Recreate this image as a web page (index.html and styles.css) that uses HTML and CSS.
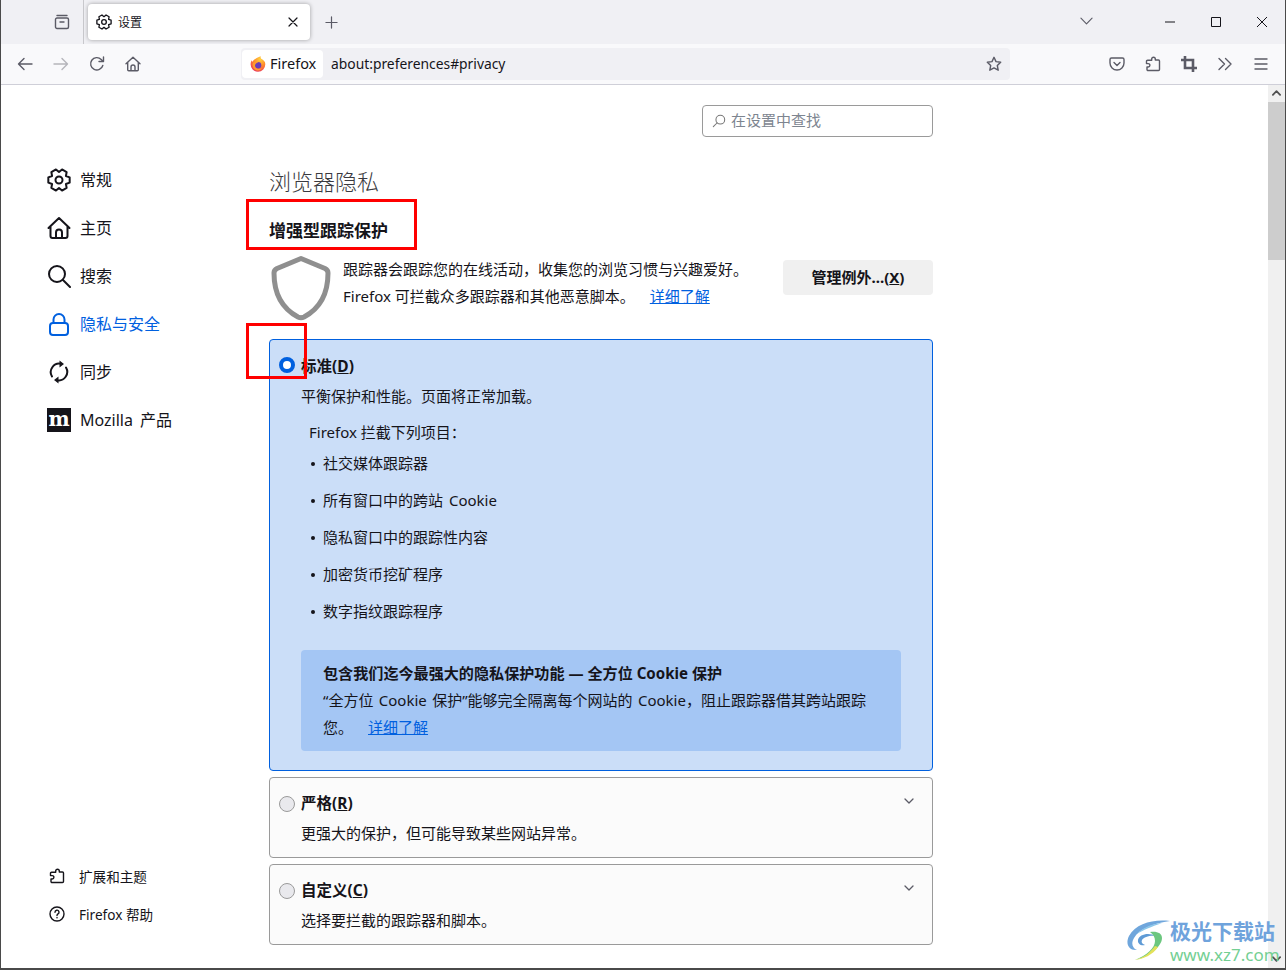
FILE: index.html
```html
<!DOCTYPE html>
<html lang="zh-CN">
<head>
<meta charset="utf-8">
<title>设置</title>
<link rel="stylesheet" href="styles.css">
</head>
<body>
<div class="window">
  <header class="tabbar">
    <button class="tabs-btn" aria-label="tabs">
      <svg class="ic16" viewBox="0 0 16 16"><path d="M3 1.5h10M1.5 5.5a1.5 1.5 0 0 1 1.5-1.5h10a1.5 1.5 0 0 1 1.5 1.5v7.5a1.5 1.5 0 0 1-1.5 1.5H3a1.5 1.5 0 0 1-1.5-1.5zM6 8h4"/></svg>
    </button>
    <div class="tab">
      <svg class="ic16 dark" viewBox="0 0 24 24"><polygon class="thick" points="22.67,9.34 22.67,14.66 18.93,16 19.64,19.91 15.03,22.57 12,20 8.97,22.57 4.36,19.91 5.07,16 1.33,14.66 1.33,9.34 5.07,8 4.36,4.09 8.97,1.43 12,4 15.03,1.43 19.64,4.09 18.93,8"/><circle class="thick" cx="12" cy="12" r="3.5"/></svg>
      <span class="tab-title">设置</span>
      <svg class="tab-close" viewBox="0 0 10 10"><path d="M1 1l8 8M9 1l-8 8"/></svg>
    </div>
    <svg class="newtab" viewBox="0 0 14 14"><path d="M7 1v12M1 7h12"/></svg>
    <svg class="tablist" viewBox="0 0 14 8"><path d="M1 1l6 6 6-6"/></svg>
    <div class="winctl">
      <svg viewBox="0 0 12 12"><path d="M1 6h10"/></svg>
      <svg viewBox="0 0 12 12"><rect x="1.5" y="1.5" width="9" height="9"/></svg>
      <svg viewBox="0 0 12 12"><path d="M1 1l10 10M11 1L1 11"/></svg>
    </div>
  </header>

  <nav class="toolbar">
    <button class="tb"><svg class="ic16" viewBox="0 0 16 16"><path d="M15 8H1.5M7 2.5 1.5 8 7 13.5"/></svg></button>
    <button class="tb faded"><svg class="ic16" viewBox="0 0 16 16"><path d="M1 8h13.5M9 2.5 14.5 8 9 13.5"/></svg></button>
    <button class="tb"><svg class="ic16" viewBox="0 0 16 16"><path d="M13.8 9.5A6.2 6.2 0 1 1 12.2 3.4L14 5.5M14.5 1v4.5H10"/></svg></button>
    <button class="tb"><svg class="ic16" viewBox="0 0 16 16"><path d="M1 7.8 8 1.2l7 6.6M2.7 6.5v7.2a1 1 0 0 0 1 1h8.6a1 1 0 0 0 1-1V6.500M6 14.500v-3.500a2 2 0 0 1 4 0v3.500"/></svg></button>
    <div class="urlbar">
      <div class="identity">
        <svg class="fxlogo" viewBox="0.5 0 15 16">
          <defs>
            <radialGradient id="fxg" cx="0.65" cy="0.2" r="0.95"><stop offset="0" stop-color="#ffd23d"/><stop offset="0.45" stop-color="#ff8a2b"/><stop offset="1" stop-color="#e5246b"/></radialGradient>
          </defs>
          <path fill="url(#fxg)" d="M8 15.800A7.500 7.500 0 0 1 .6 8C.6 6.500 1 5.200 1.800 4.200c.1.800.4 1.200.8 1.500C3 4.500 4 3.500 5 3.200 6 2 8 1.200 10.800.2c-.4 1.200-.2 2 .4 2.600 2.300 1 4.100 3 4.100 5.200A7.500 7.500 0 0 1 8 15.800z"/>
          <circle cx="8" cy="9.200" r="3.300" fill="#6a3bb8"/>
          <path fill="#ff9a2e" d="M3 7c1.500-1 3.500-1.200 5.500-.6C6.500 6.600 5 7.800 5 9.500c0 2 1.700 3.500 4 3.500 1.500 0 2.700-.6 3.500-1.700-.6 1.900-2.400 3.200-4.500 3.200C5 14.500 2.600 12 2.600 9.200 2.600 8.300 2.700 7.600 3 7z"/>
        </svg>
        <span class="lift">Firefox</span>
      </div>
      <span class="url lift">about:preferences#privacy</span>
      <svg class="ic16 star" viewBox="0 0 16 16"><path d="M8 1.300l2 4.300 4.700.6-3.400 3.300.9 4.700L8 11.900l-4.200 2.300.9-4.700L1.300 6.200 6 5.600z"/></svg>
    </div>
    <div class="tb-right">
      <button class="tb"><svg class="ic16" viewBox="0 0 16 16"><path d="M2.500 2h11A1.500 1.500 0 0 1 15 3.500V7a7 7 0 0 1-14 0V3.500A1.500 1.500 0 0 1 2.500 2zM5 6.500l3 3 3-3"/></svg></button>
      <button class="tb"><svg class="ic16" viewBox="0 0 16 16"><path d="M8.500 1.200a1.800 1.800 0 0 1 1.800 1.800v1h3.200a1 1 0 0 1 1 1v8.500a1 1 0 0 1-1 1H3a1 1 0 0 1-1-1V11h1.200a1.700 1.700 0 0 0 0-3.400H1.500V5.200a1 1 0 0 1 1-1h4.200V3a1.800 1.800 0 0 1 1.800-1.800z"/></svg></button>
      <button class="tb"><svg class="ic16 heavy" viewBox="0 0 16 16"><path d="M4 0v12h12M0 4h12v12"/></svg></button>
      <button class="tb"><svg class="ic16" viewBox="0 0 16 16"><path d="M2 2.500 7.500 8 2 13.500M8.500 2.500 14 8l-5.500 5.500"/></svg></button>
      <button class="tb"><svg class="ic16" viewBox="0 0 16 16"><path d="M2 3h12M2 8h12M2 13h12"/></svg></button>
    </div>
  </nav>

  <div class="page">
    <aside class="sidebar">
      <ul class="nav">
        <li class="nav-item">
          <svg class="ic24" viewBox="0 0 24 24"><polygon points="22.67,9.34 22.67,14.66 18.93,16 19.64,19.91 15.03,22.57 12,20 8.97,22.57 4.36,19.91 5.07,16 1.33,14.66 1.33,9.34 5.07,8 4.36,4.09 8.97,1.43 12,4 15.03,1.43 19.64,4.09 18.93,8"/><circle cx="12" cy="12" r="3.500"/></svg>
          <span class="lift">常规</span>
        </li>
        <li class="nav-item">
          <svg class="ic24" viewBox="0 0 24 24"><path d="M1.500 12 12 2l10.500 10M3.500 10.500V20a2 2 0 0 0 2 2h13a2 2 0 0 0 2-2v-9.500M9 22v-5.500a3 3 0 0 1 6 0V22"/></svg>
          <span class="lift">主页</span>
        </li>
        <li class="nav-item">
          <svg class="ic24" viewBox="0 0 24 24"><circle cx="10" cy="10" r="8"/><path d="M16 16l7 7"/></svg>
          <span class="lift">搜索</span>
        </li>
        <li class="nav-item active">
          <svg class="ic24" viewBox="0 0 24 24"><rect x="3" y="11" width="18" height="12" rx="3"/><path d="M6.500 11V7.500a5.500 5.500 0 0 1 11 0V11"/></svg>
          <span class="lift">隐私与安全</span>
        </li>
        <li class="nav-item">
          <svg class="ic24" viewBox="0 0 24 24"><path d="M5 16.500A8.500 8.500 0 0 1 14 3.800M19 7.500A8.500 8.500 0 0 1 10 20.200"/><path class="fill" d="M12.500 .5v7l4.500-3.500zM11.500 23.500v-7L7 20z"/></svg>
          <span class="lift">同步</span>
        </li>
        <li class="nav-item">
          <span class="moz">m</span>
          <span class="lift wide">Mozilla 产品</span>
        </li>
      </ul>
      <ul class="nav-foot">
        <li class="foot-item">
          <svg class="ic16 dark" viewBox="0 0 16 16"><path d="M8.500 1.200a1.800 1.800 0 0 1 1.800 1.800v1h3.200a1 1 0 0 1 1 1v8.500a1 1 0 0 1-1 1H3a1 1 0 0 1-1-1V11h1.200a1.700 1.700 0 0 0 0-3.400H1.500V5.200a1 1 0 0 1 1-1h4.200V3a1.800 1.800 0 0 1 1.800-1.800z"/></svg>
          <span>扩展和主题</span>
        </li>
        <li class="foot-item">
          <svg class="ic16 dark" viewBox="0 0 16 16"><circle cx="8" cy="8" r="7"/><path d="M6 6.200a2 2 0 1 1 3 1.700c-.7.400-1 .8-1 1.600"/><circle class="fill" cx="8" cy="11.800" r=".8"/></svg>
          <span>Firefox 帮助</span>
        </li>
      </ul>
    </aside>

    <main class="main">
      <div class="search-row">
        <div class="search">
          <svg class="search-ic" viewBox="0 0 16 16"><circle cx="9.500" cy="6.500" r="5"/><path d="M6 10 1.500 14.500"/></svg>
          <span>在设置中查找</span>
        </div>
      </div>
      <h1 class="title">浏览器隐私</h1>
      <h2 class="subtitle">增强型跟踪保护</h2>
      <section class="intro">
        <svg class="shield" viewBox="0 0 60 66"><path d="M30 3.500 54 13.500Q57 15 57 18C57 40 48 54 33 62Q30 63.500 27 62C12 54 3 40 3 18Q3 15 6 13.500Z"/></svg>
        <div class="intro-text">
          <p>跟踪器会跟踪您的在线活动，收集您的浏览习惯与兴趣爱好。</p>
          <p>Firefox 可拦截众多跟踪器和其他恶意脚本。<a class="link learn">详细了解</a></p>
        </div>
        <button class="manage">管理例外...(<u>X</u>)</button>
      </section>

      <section class="card selected">
        <div class="card-head"><span class="radio on"></span><strong>标准(<u>D</u>)</strong></div>
        <p class="card-desc">平衡保护和性能。页面将正常加载。</p>
        <p class="blocks">Firefox 拦截下列项目：</p>
        <ul class="block-list">
          <li>社交媒体跟踪器</li>
          <li>所有窗口中的跨站 Cookie</li>
          <li>隐私窗口中的跟踪性内容</li>
          <li>加密货币挖矿程序</li>
          <li>数字指纹跟踪程序</li>
        </ul>
        <div class="callout">
          <p class="callout-title"><strong>包含我们迄今最强大的隐私保护功能 — 全方位 Cookie 保护</strong></p>
          <p class="callout-body">“全方位 Cookie 保护”能够完全隔离每个网站的 Cookie，阻止跟踪器借其跨站跟踪</p>
          <p>您。<a class="link learn">详细了解</a></p>
        </div>
      </section>

      <section class="card">
        <div class="card-head"><span class="radio"></span><strong>严格(<u>R</u>)</strong><svg class="chev" viewBox="0 0 10 6"><path d="M1 1l4 4 4-4"/></svg></div>
        <p class="card-desc">更强大的保护，但可能导致某些网站异常。</p>
      </section>
      <section class="card">
        <div class="card-head"><span class="radio"></span><strong>自定义(<u>C</u>)</strong><svg class="chev" viewBox="0 0 10 6"><path d="M1 1l4 4 4-4"/></svg></div>
        <p class="card-desc">选择要拦截的跟踪器和脚本。</p>
      </section>
    </main>

    <div class="scrollbar">
      <svg class="sb-arrow" viewBox="0 0 10 6"><path d="M1 5l4-4 4 4"/></svg>
      <div class="sb-thumb"></div>
      <svg class="sb-arrow sb-down" viewBox="0 0 10 6"><path d="M1 1l4 4 4-4"/></svg>
    </div>
  </div>
</div>

<div class="mark mark-a"></div>
<div class="mark mark-b"></div>

<div class="watermark">
  <svg class="wm-logo" viewBox="0 0 44 40">
    <path fill="#6fa6dc" d="M44 1C28-1 10 3 3 16c-4 8 0 15 8 14-5-2-6-7-3-12C13 9 28 3 44 1z"/>
    <path fill="#8cc7ea" d="M36 3C25 4 16 8 11 14c6-4 14-7 25-11z"/>
    <path fill="#5f9bd6" d="M30 16c-7-4-17-2-18 4-.6 4 3 6 7 5-3-1-4-3-3-5 2-3 8-5 14-4z"/>
    <path fill="#6cc77f" d="M24 12c7-1 12 1 12 6 0 9-14 19-27 22 12-5 20-12 20-19 0-4-2-7-5-9z"/>
    <path fill="#e3e25a" d="M29 26C24 33 17 38 9 40c8-1 18-5 23-13z"/>
  </svg>
  <div class="wm-text">
    <div class="wm-cn">极光下载站</div>
    <div class="wm-en">www.xz7.com</div>
  </div>
</div>
</body>
</html>
```

FILE: styles.css
```css
* { box-sizing: border-box; }
html, body { margin: 0; padding: 0; }
body {
  width: 1286px;
  height: 970px;
  overflow: hidden;
  position: relative;
  background: #fff;
  color: #15141a;
  font-family: "Noto Sans", "Noto Sans CJK SC", sans-serif;
  font-size: 15px;
}
p, ul, h1, h2 { margin: 0; padding: 0; font-weight: normal; }
ul { list-style: none; }
button { border: 0; background: none; padding: 0; font: inherit; color: inherit; }
svg { fill: none; stroke-linecap: round; stroke-linejoin: round; flex: none; display: block; }
.lift { padding-bottom: 2px; }

.window {
  width: 1286px;
  height: 970px;
  display: flex;
  flex-direction: column;
  border: 1px solid #4a4a4a;
  border-top: 0;
  border-bottom-width: 2px;
}

.ic16 { width: 16px; height: 16px; stroke: #5b5b66; stroke-width: 1.4; }
.ic16.dark { stroke: #15141a; }
.ic16 .thick { stroke-width: 2; }
.ic24 { width: 24px; height: 24px; stroke: #15141a; stroke-width: 2; }
.fill { fill: currentColor; stroke: none; }

/* tab bar */
.tabbar {
  height: 44px;
  flex: none;
  display: flex;
  align-items: center;
  background: #f0f0f4;
}
.tabs-btn {
  width: 83px;
  height: 44px;
  border-right: 1px solid #c8c8cc;
  display: flex;
  align-items: center;
  justify-content: flex-end;
  padding-right: 13px;
}
.tab {
  width: 222px;
  height: 36px;
  margin-left: 4px;
  background: #fff;
  border-radius: 4px;
  box-shadow: 0 0 4px rgba(0, 0, 0, .35);
  display: flex;
  align-items: center;
  padding-left: 8px;
}
.tab-title { font-size: 12px; margin-left: 6px; flex: 1; }
.tab-close { width: 10px; height: 10px; stroke: #15141a; stroke-width: 1.2; margin-right: 12px; }
.newtab { width: 13px; height: 13px; stroke: #5b5b66; stroke-width: 1.3; margin-left: 15px; }
.tablist { width: 13px; height: 8px; stroke: #5b5b66; stroke-width: 1.2; margin-left: 742px; margin-top: -2px; }
.winctl { display: flex; gap: 34px; margin-left: 71px; margin-top: -1px; }
.winctl svg { width: 12px; height: 12px; stroke: #15141a; stroke-width: 1; stroke-linecap: butt; }

/* toolbar */
.toolbar {
  height: 41px;
  flex: none;
  display: flex;
  align-items: center;
  padding: 0 6px;
  background: #f9f9fb;
  border-bottom: 1px solid #cfcfd8;
}
.tb { width: 36px; height: 32px; display: flex; align-items: center; justify-content: center; }
.tb.faded svg { stroke: #b5b5bb; }
.tb .heavy { stroke-width: 2.600; stroke-linecap: butt; stroke-linejoin: miter; }
.urlbar {
  flex: 1;
  height: 32px;
  margin-left: 90px;
  margin-right: 89px;
  background: #f0f0f4;
  border-radius: 4px;
  display: flex;
  align-items: center;
  padding: 0 8px 0 1px;
}
.identity {
  height: 28px;
  width: 81px;
  background: #fff;
  border-radius: 4px;
  display: flex;
  align-items: center;
  padding-left: 8px;
  gap: 4px;
  font-size: 14.500px;
}
.fxlogo { width: 16px; height: 16px; }
.url { margin-left: 8px; flex: 1; font-size: 13.850px; }
.tb-right { display: flex; }

/* page layout */
.page { flex: 1; display: flex; min-height: 0; }
.sidebar {
  width: 268px;
  flex: none;
  display: flex;
  flex-direction: column;
  padding: 71px 0 35px 46px;
}
.nav-item {
  height: 48px;
  display: flex;
  align-items: center;
  gap: 9px;
  font-size: 16px;
}
.nav-item .wide { word-spacing: 3px; }
.nav-item.active { color: #0060df; }
.nav-item.active svg { stroke: #0060df; }
.moz {
  width: 24px;
  height: 24px;
  background: #15141a;
  color: #fff;
  font-family: "DejaVu Serif", serif;
  font-weight: 700;
  font-size: 20px;
  line-height: 22px;
  text-align: center;
  flex: none;
}
.nav-foot { margin-top: auto; }
.foot-item {
  height: 38px;
  display: flex;
  align-items: center;
  gap: 14px;
  font-size: 13.600px;
  padding-left: 2px;
}

.main { width: 664px; flex: none; }
.search-row { display: flex; justify-content: flex-end; margin-top: 20px; }
.search {
  width: 231px;
  height: 32px;
  border: 1px solid #9a9a9a;
  border-radius: 4px;
  display: flex;
  align-items: center;
  padding: 0 0 3px 9px;
  gap: 5px;
  color: #7d8590;
  font-size: 15px;
}
.search-ic { width: 14px; height: 14px; stroke: #777; stroke-width: 1.200; margin-top: 3px; }
.title { font-size: 22px; line-height: 30px; margin-top: 29px; font-weight: 300; color: #3a3a40; }
.subtitle { font-size: 17px; line-height: 24px; margin-top: 23px; font-weight: 700; }

.intro { display: flex; height: 84px; margin-top: 12px; }
.shield { width: 60px; height: 66px; margin-left: 2px; stroke: #8f8f8f; stroke-width: 5; }
.intro-text { margin-left: 12px; width: 440px; padding-top: 1px; line-height: 27px; }
.link { color: #0060df; text-decoration: underline; }
.learn { margin-left: 15px; }
.manage {
  width: 150px;
  height: 35px;
  margin-top: 5px;
  padding-bottom: 2px;
  background: #f0f0f0;
  border-radius: 4px;
  font-weight: 700;
  font-size: 15px;
}

.card {
  background: #fbfbfb;
  border: 1px solid #9a9a9a;
  border-radius: 4px;
  padding: 14px 9px 14px;
  margin-bottom: 6px;
}
.card.selected {
  background: #cbdef8;
  border-color: #0060df;
  padding: 15px 9px 19px;
}
.card-head { display: flex; align-items: center; height: 20px; line-height: 20px; }
.card-head strong { margin: 2px 0 0 6px; font-size: 15.500px; }
.radio {
  width: 16px;
  height: 16px;
  margin: 2px 0 -2px;
  border: 1px solid #9a9a9a;
  border-radius: 50%;
  background: #e9e9ed;
  flex: none;
}
.radio.on { margin: 0; background: #fff; border: 4px solid #0060df; }
.chev { width: 10px; height: 6px; stroke: #5b5b66; stroke-width: 1.300; margin-left: auto; margin-right: 9px; margin-top: -2px; }
.card-desc { line-height: 20px; margin: 11px 0 0 22px; }
.blocks { line-height: 20px; margin: 16px 0 0 30px; }
.block-list { margin: 11px 0 0 44px; display: flex; flex-direction: column; gap: 17px; word-spacing: 2px; }
.block-list li { line-height: 20px; position: relative; }
.block-list li::before {
  content: "";
  position: absolute;
  left: -12px;
  top: 9px;
  width: 4px;
  height: 4px;
  border-radius: 50%;
  background: #15141a;
}
.callout {
  margin: 29px 22px 0 22px;
  width: 600px;
  height: 101px;
  padding: 10px 22px 0;
  background: #a4c6f4;
  border-radius: 4px;
  line-height: 27px;
}
.callout-title strong { font-size: 15.100px; }
.callout-body { word-spacing: 1.500px; white-space: nowrap; }

.scrollbar {
  width: 17px;
  margin-left: auto;
  background: #f0f0f0;
  display: flex;
  flex-direction: column;
  align-items: center;
}
.sb-arrow { width: 9px; height: 6px; stroke: #505050; stroke-width: 2; margin-top: 5px; }
.sb-thumb { width: 17px; height: 158px; background: #cdcdcd; margin-top: 6px; }
.sb-down { margin-top: auto; margin-bottom: 6px; }

/* annotations */
.mark { position: absolute; border: 3px solid #f00; }
.mark-a { left: 246px; top: 199px; width: 171px; height: 51px; }
.mark-b { left: 246px; top: 323px; width: 61px; height: 56px; }

.watermark { position: absolute; left: 1126px; top: 919px; display: flex; }
.wm-logo { width: 44px; height: 40px; margin-top: 1px; }
.wm-text { display: flex; flex-direction: column; }
.wm-cn { font-size: 21px; line-height: 25px; font-weight: 700; color: #6fa3dc; white-space: nowrap; }
.wm-en { font-size: 17px; line-height: 22px; color: #74cf93; white-space: nowrap; }
```
